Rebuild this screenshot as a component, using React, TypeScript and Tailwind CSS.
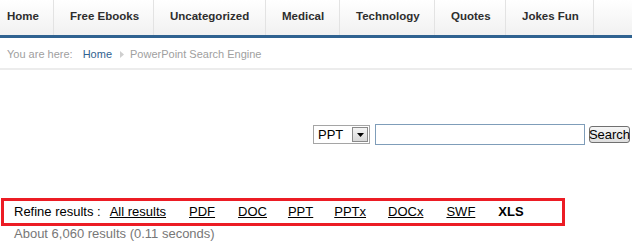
import React from "react";

const navItems = [
  { t: "Home", w: 54, pl: 7 },
  { t: "Free Ebooks", w: 100, pl: 16 },
  { t: "Uncategorized", w: 112, pl: 16 },
  { t: "Medical", w: 74, pl: 16 },
  { t: "Technology", w: 95, pl: 16 },
  { t: "Quotes", w: 71, pl: 16 },
  { t: "Jokes Fun", w: 88, pl: 16 },
];
const links = [
  { t: "All results", ml: 9 },
  { t: "PDF", ml: 23 },
  { t: "DOC", ml: 23 },
  { t: "PPT", ml: 21 },
  { t: "PPTx", ml: 21 },
  { t: "DOCx", ml: 22 },
  { t: "SWF", ml: 23 },
];

export default function App() {
  return (
    <div className="w-[632px] h-[243px] bg-white overflow-hidden" style={{ fontFamily: '"Liberation Sans", Arial, sans-serif' }}>
      {/* Nav */}
      <div className="h-[35px] flex bg-gradient-to-b from-white to-[#f1f1f1]">
        {navItems.map((n) => (
          <div
            key={n.t}
            className="h-full flex items-center border-r border-[#e3e3e3] text-[11.5px] font-bold text-[#2e2e2e] pb-[1px]"
            style={{ width: n.w, paddingLeft: n.pl }}
          >
            {n.t}
          </div>
        ))}
      </div>
      <div className="h-[3px] bg-[#2f6290]" />
      {/* Breadcrumb */}
      <div className="h-[30px] flex items-center pl-[7px] pt-[2px] text-[11px] text-[#a0a0a0]">
        <span>You are here:</span>
        <span className="ml-[10px] text-[#2f6290]">Home</span>
        <svg width="4" height="7" viewBox="0 0 4 7" className="ml-[8px] mr-[6px]">
          <path d="M0 0 L4 3.5 L0 7 Z" fill="#cfcfcf" />
        </svg>
        <span>PowerPoint Search Engine</span>
      </div>
      <div className="h-[2px] bg-[#ececec]" />
      {/* Search form */}
      <div className="mt-[54px] flex items-center justify-end pr-[2px] h-[21px]">
        <div className="w-[57px] h-[19px] border border-[#a5a5a5] flex items-center justify-between bg-white">
          <span className="pl-[4px] text-[13px] text-black leading-none">PPT</span>
          <div className="w-[16px] h-[15px] mr-[1px] bg-gradient-to-b from-[#f4f4f4] to-[#d8d8d8] border border-[#8a8a8a] flex items-center justify-center">
            <svg width="7" height="4" viewBox="0 0 7 4"><path d="M0 0 H7 L3.5 4 Z" fill="#000" /></svg>
          </div>
        </div>
        <div className="ml-[5px] w-[210px] h-[21px] border border-[#7f9db9] bg-white" />
        <div className="ml-[4px] w-[41px] h-[17px] border border-[#707070] rounded-[3px] bg-gradient-to-b from-[#f6f6f6] to-[#dedede] flex items-center justify-center text-[13px] text-black leading-none">
          Search
        </div>
      </div>
      {/* Refine box */}
      <div className="mt-[53px] ml-[1px] w-[564px] h-[28px] border-[3px] border-[#ec1c24] flex items-center pl-[10px] text-[13px] text-black">
        <span>Refine results :</span>
        {links.map((l) => (
          <span key={l.t} className="underline" style={{ marginLeft: l.ml }}>{l.t}</span>
        ))}
        <span className="font-bold ml-[23px]">XLS</span>
      </div>
      <div className="pl-[14px] text-[13px] leading-[16px] text-[#777]">About 6,060 results (0.11 seconds)</div>
    </div>
  );
}
